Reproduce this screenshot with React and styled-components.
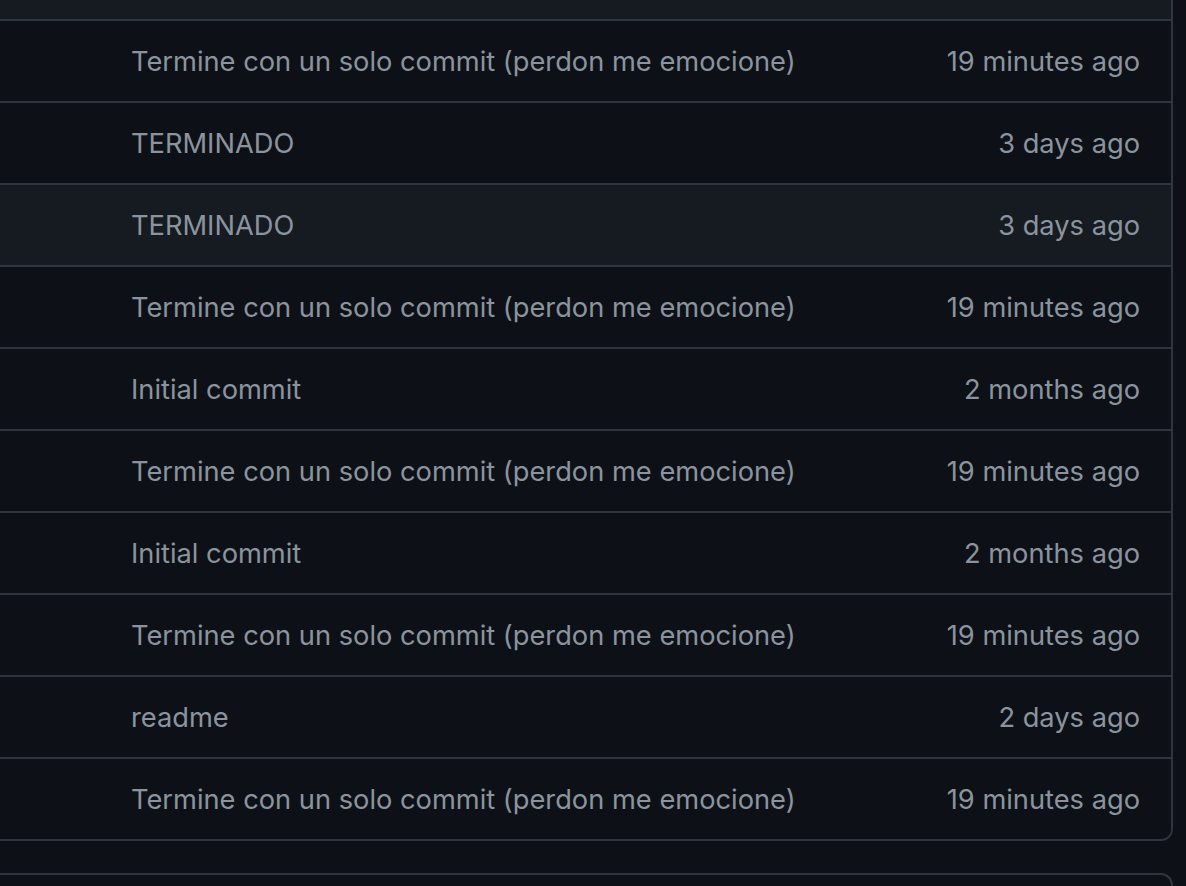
import styled, { createGlobalStyle } from "styled-components";

const GlobalStyle = createGlobalStyle`
  html, body {
    margin: 0;
    padding: 0;
    background: #0d1117;
  }
  body {
    font-family: Inter, "Liberation Sans", sans-serif;
    overflow: hidden;
  }
`;

const Page = styled.div`
  width: 1186px;
  height: 886px;
  overflow: hidden;
  background: #0d1117;
`;

const FileBox = styled.div`
  margin: -41px 13px 0 -40px;
  border: 2px solid #30363d;
  border-radius: 12px;
  overflow: hidden;
`;

const BoxHeader = styled.div`
  height: 58px;
  background: #161b22;
`;

const Row = styled.div`
  display: grid;
  grid-template-columns: 171px 1fr auto;
  align-items: center;
  height: 80px;
  padding-right: 31px;
  border-top: 2px solid #30363d;
  background: ${(p) => (p.$hover ? "#161b22" : "#0d1117")};
`;

const Message = styled.span`
  margin-left: -2px;
  color: #8b949e;
  font-size: 27.25px;
  white-space: nowrap;
`;

const Age = styled.span`
  color: #8b949e;
  font-size: 27.25px;
  white-space: nowrap;
  text-align: right;
`;

const NextBox = styled.div`
  margin: 32px 13px 0 -40px;
  height: 80px;
  border: 2px solid #30363d;
  border-radius: 12px;
`;

const rows = [
  ["Termine con un solo commit (perdon me emocione)", "19 minutes ago"],
  ["TERMINADO", "3 days ago"],
  ["TERMINADO", "3 days ago", true],
  ["Termine con un solo commit (perdon me emocione)", "19 minutes ago"],
  ["Initial commit", "2 months ago"],
  ["Termine con un solo commit (perdon me emocione)", "19 minutes ago"],
  ["Initial commit", "2 months ago"],
  ["Termine con un solo commit (perdon me emocione)", "19 minutes ago"],
  ["readme", "2 days ago"],
  ["Termine con un solo commit (perdon me emocione)", "19 minutes ago"],
];

export default function App() {
  return (
    <Page>
      <GlobalStyle />
      <FileBox>
        <BoxHeader />
        {rows.map(([msg, age, hover], i) => (
          <Row key={i} $hover={hover}>
            <span />
            <Message>{msg}</Message>
            <Age>{age}</Age>
          </Row>
        ))}
      </FileBox>
      <NextBox />
    </Page>
  );
}
